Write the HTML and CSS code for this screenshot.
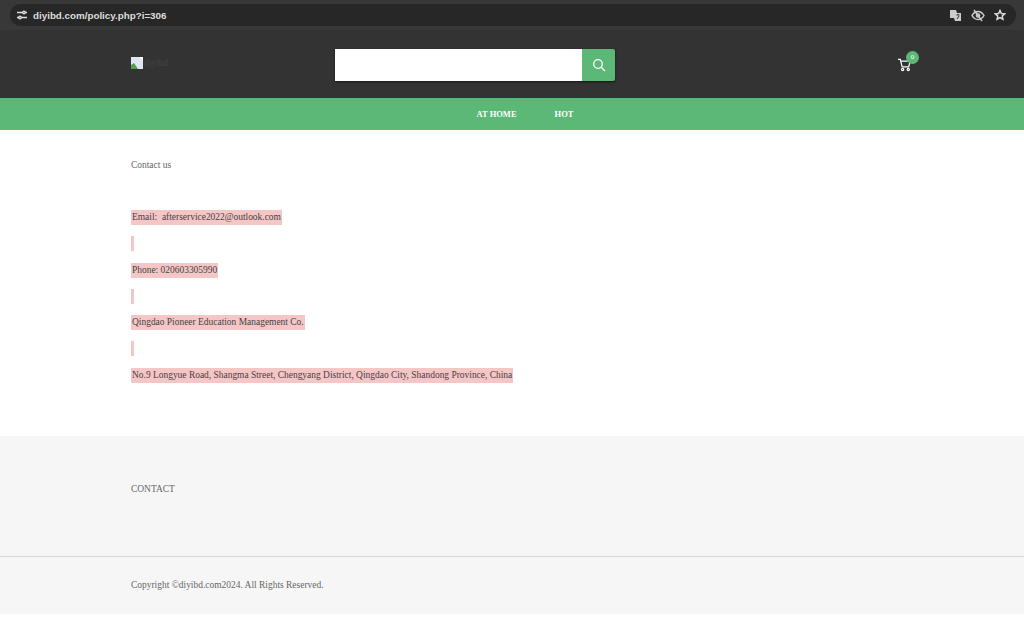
FILE: index.html
```html
<!DOCTYPE html>
<html lang="en">
<head>
    <meta charset="UTF-8">
    <title>Contact us</title>
    <link rel="stylesheet" href="styles.css">
</head>
<body>

<!-- address bar -->
<div class="browser-bar">
    <div class="url-pill">
        <svg class="tune-icon" width="12" height="12" viewBox="0 0 12 12" fill="none" stroke="#ddd" stroke-width="1.4">
            <path d="M1 3.5h6M9 3.5h2M1 8.5h2M5 8.5h6"/>
            <circle cx="8" cy="3.5" r="1.2"/>
            <circle cx="4" cy="8.5" r="1.2"/>
        </svg>
        <span class="url-text">diyibd.com/policy.php?i=306</span>
        <div class="bar-icons">
            <svg width="13" height="13" viewBox="0 0 13 13">
                <path d="M1 1h6l1 3h4v8H6l-1-3H1z" fill="#ccc"/>
                <path d="M7.5 6h3M9 5v1M8 10l2-3" stroke="#333" fill="none"/>
            </svg>
            <svg width="14" height="13" viewBox="0 0 14 13" fill="none" stroke="#ccc" stroke-width="1.5">
                <path d="M1 6.5C3 3 5 2.500 7 2.500S11 3 13 6.500C11 10 9 10.500 7 10.500S3 10 1 6.500z"/>
                <circle cx="7" cy="6.500" r="1.600"/>
                <path d="M3 1l8 11"/>
            </svg>
            <svg width="12" height="12" viewBox="0 0 24 24" fill="none" stroke="#ddd" stroke-width="3">
                <path d="M12 3l2.800 6 6.500.7-4.800 4.400 1.300 6.400L12 17.300 6.200 20.500l1.300-6.400L2.700 9.700 9.200 9z"/>
            </svg>
        </div>
    </div>
</div>

<header class="site-header">
    <div class="wrap header-row">
        <div class="logo">
            <svg width="12" height="12" viewBox="0 0 12 12">
                <rect width="12" height="12" fill="#dfe6f2"/>
                <path d="M0 12V8l3-2 4 6z" fill="#5a9e4b"/>
                <path d="M8 0h4v4z" fill="#fff"/>
            </svg>
            <span class="logo-alt">diyibd</span>
        </div>
        <form class="search">
            <input class="search-input" type="text">
            <button class="search-btn" type="button">
                <svg width="14" height="14" viewBox="0 0 14 14" fill="none" stroke="#fff" stroke-width="1.300">
                    <circle cx="6" cy="6" r="4.300"/>
                    <path d="M9.200 9.200L13 13"/>
                </svg>
            </button>
        </form>
        <div class="cart">
            <svg width="15" height="15" viewBox="0 0 16 15" fill="none" stroke="#fff" stroke-width="1.300">
                <path d="M1 2h2.500l2 8h7l1.500-6H4"/>
                <circle cx="6" cy="12.800" r="1.200"/>
                <circle cx="12" cy="12.800" r="1.200"/>
            </svg>
            <span class="cart-count">0</span>
        </div>
    </div>
</header>

<nav class="main-nav">
    <a href="#">AT HOME</a>
    <a href="#">HOT</a>
</nav>

<main class="wrap content">
    <p class="page-title">Contact us</p>
    <p class="line"><span class="mark">Email:&nbsp; afterservice2022@outlook.com</span></p>
    <p class="line"><span class="mark mark-empty"></span></p>
    <p class="line"><span class="mark">Phone: 020603305990</span></p>
    <p class="line"><span class="mark mark-empty"></span></p>
    <p class="line"><span class="mark">Qingdao Pioneer Education Management Co.</span></p>
    <p class="line"><span class="mark mark-empty"></span></p>
    <p class="line"><span class="mark">No.9 Longyue Road, Shangma Street, Chengyang District, Qingdao City, Shandong Province, China</span></p>
</main>

<footer class="site-footer">
    <div class="wrap footer-top">CONTACT</div>
    <div class="wrap footer-copy">Copyright ©diyibd.com2024. All Rights Reserved.</div>
</footer>

</body>
</html>
```

FILE: styles.css
```css
* {
    box-sizing: border-box;
}
body {
    margin: 0;
    font-family: "Liberation Serif", serif;
    font-size: 9.45px;
    background-color: #fff;
    color: #555;
}
p {
    margin: 0;
}
.wrap {
    padding-left: 131px;
    padding-right: 131px;
}

.browser-bar {
    height: 30px;
    padding: 4px 8px 4px 10px;
    background-color: #383838;
}
.url-pill {
    display: flex;
    align-items: center;
    height: 22px;
    padding: 0 10px 0 6px;
    border-radius: 11px;
    background-color: #272727;
}
.url-text {
    margin-left: 5px;
    font-family: "Liberation Sans", sans-serif;
    font-size: 9.8px;
    font-weight: bold;
    color: #ddd;
}
.bar-icons {
    display: flex;
    align-items: center;
    gap: 9px;
    margin-left: auto;
}

.site-header {
    height: 68px;
    background-color: #333;
}
.header-row {
    display: flex;
    align-items: center;
    height: 68px;
    padding-right: 0;
}
.logo {
    display: flex;
    align-items: center;
    width: 204px;
    margin-top: -2px;
}
.logo-alt {
    margin-left: 1px;
    color: #444;
}
.search {
    display: flex;
    width: 280px;
    height: 32px;
    margin-top: 2px;
    box-shadow: 0 1px 2px rgba(0, 0, 0, 0.6);
}
.search-input {
    flex: 1;
    min-width: 0;
    border: none;
    background-color: #fff;
}
.search-btn {
    display: flex;
    align-items: center;
    justify-content: center;
    width: 33px;
    padding: 0;
    border: none;
    border-radius: 0 2px 2px 0;
    background-color: #5cb876;
}
.cart {
    position: relative;
    width: 15px;
    margin-left: 282px;
    margin-top: 1px;
}
.cart svg {
    display: block;
}
.cart-count {
    position: absolute;
    top: -6px;
    left: 9px;
    width: 13px;
    height: 13px;
    border-radius: 50%;
    background-color: #5cb876;
    color: #fff;
    font-size: 7px;
    line-height: 13px;
    text-align: center;
}

.main-nav {
    display: flex;
    justify-content: center;
    align-items: center;
    gap: 38px;
    height: 32px;
    padding-left: 26px;
    background-color: #5cb876;
}
.main-nav a {
    color: #fff;
    font-size: 8.5px;
    font-weight: bold;
    text-decoration: none;
}

.content {
    height: 306px;
    padding-top: 29px;
    color: #444;
}
.page-title {
    height: 51px;
    color: #666;
    line-height: 12px;
}
.line {
    height: 26.25px;
}
.mark {
    display: inline-block;
    padding: 2px 1px;
    line-height: 11px;
    vertical-align: top;
    background-color: #f5c6c6;
}
.mark-empty {
    width: 3px;
    height: 15px;
}

.site-footer {
    height: 178px;
    background-color: #f6f6f6;
    color: #666;
}
.footer-top {
    height: 121px;
    padding-top: 48px;
    border-bottom: 1px solid #d8d8d8;
}
.footer-copy {
    padding-top: 23px;
}
```
